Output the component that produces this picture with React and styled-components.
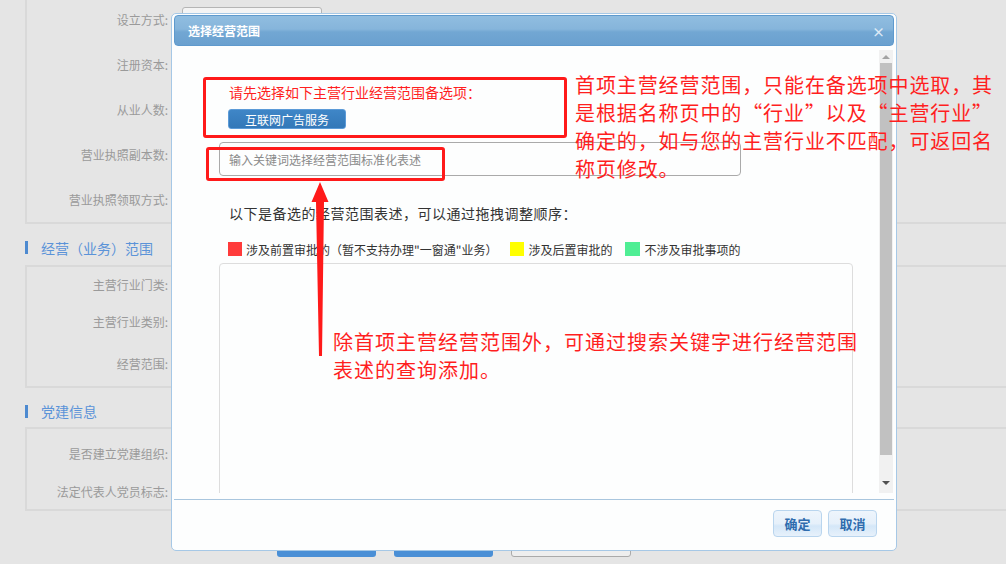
import styled, { createGlobalStyle } from 'styled-components'

const GlobalStyle = createGlobalStyle`
  html, body {
    margin: 0;
    padding: 0;
    background: #e5e5e5;
    font-family: "Noto Sans CJK SC", "Noto Sans", "Liberation Sans", sans-serif;
  }
  * { box-sizing: border-box; }
`

const Page = styled.div`
  position: relative;
  width: 1006px;
  height: 564px;
  overflow: hidden;
  background: #e5e5e5;
`

/* ---------- background form ---------- */

const Panel = styled.div`
  margin-left: 25px;
  width: 1100px;
  border: 2px solid #d9d9d9;
  border-right: none;
  border-top: ${({ cut }) => (cut ? 'none' : '2px solid #d9d9d9')};
  margin-top: ${({ cut }) => (cut ? '-3px' : '0')};
  padding-top: ${({ pad }) => pad || 0}px;
`

const Row = styled.div`
  display: flex;
  align-items: center;
  height: ${({ h }) => h || 45}px;
`

const Label = styled.div`
  width: 141px;
  text-align: right;
  font-size: 12px;
  color: #9a9a9a;
  white-space: nowrap;
`

const Field = styled.div`
  margin-left: 14px;
  width: 140px;
  height: 26px;
  border: 1px solid #b5b5b5;
  border-radius: 3px;
  background: #f4f4f4;
`

const SectionTitle = styled.div`
  display: flex;
  align-items: center;
  height: ${({ h }) => h}px;
  padding-left: 25px;
  padding-top: ${({ top }) => top || 0}px;
  font-size: 14px;
  color: #5b93d8;
  &::before {
    content: '';
    display: block;
    width: 3px;
    height: 13px;
    background: #4d8ad0;
    margin-right: 13px;
  }
`

const ButtonBar = styled.div`
  display: flex;
  gap: 18px;
  margin-top: 18px;
  padding-left: 277px;
`

const BgButton = styled.div`
  width: ${({ w }) => w || 99}px;
  height: 28px;
  border-radius: 3px;
  background: ${({ grey }) => (grey ? '#eeeeee' : '#4a8fd6')};
  border: ${({ grey }) => (grey ? '1px solid #aaaaaa' : 'none')};
`

/* ---------- modal ---------- */

const Modal = styled.div`
  position: absolute;
  left: 171px;
  top: 13px;
  width: 726px;
  height: 538px;
  border: 1px solid #a6c8e6;
  border-radius: 5px;
  background: #fdfefe;
  padding: 1px 2px 0 2px;
  display: flex;
  flex-direction: column;
`

const Header = styled.div`
  height: 31px;
  flex: none;
  display: flex;
  align-items: center;
  justify-content: space-between;
  padding: 0 8px 0 13px;
  border: 1px solid #5f9acd;
  border-radius: 4px;
  background: linear-gradient(to bottom, #90bde0 0%, #86b5db 45%, #72a7d3 55%, #6aa0cf 100%);
`

const Title = styled.span`
  color: #ffffff;
  font-size: 12px;
  font-weight: bold;
`

const Close = styled.span`
  color: #dce9f6;
  font-size: 13px;
  font-weight: bold;
  line-height: 1;
  margin-top: 2px;
`

const Body = styled.div`
  display: flex;
  height: 447px;
  flex: none;
`

const Content = styled.div`
  flex: 1;
  overflow: hidden;
  padding-left: 45px;
`

const Hint = styled.div`
  margin-top: 36px;
  padding-left: 10px;
  font-size: 14px;
  line-height: 20px;
  color: #ff1f1f;
`

const MainScope = styled.div`
  margin-top: 7px;
  margin-left: 9px;
  width: 118px;
  height: 20px;
  display: flex;
  align-items: center;
  justify-content: center;
  font-size: 12px;
  color: #fff;
  border: 1px solid #5c9bd8;
  border-radius: 3px;
  background: linear-gradient(to bottom, #3f86c7, #3378b8);
`

const Search = styled.div`
  margin-top: 13px;
  width: 522px;
  height: 34px;
  border: 1px solid #aaaaaa;
  border-radius: 4px;
  display: flex;
  align-items: center;
  padding-left: 9px;
  font-size: 12px;
  color: #8a8a8a;
`

const Desc = styled.div`
  margin-top: 27px;
  padding-left: 10px;
  font-size: 14px;
  line-height: 20px;
  letter-spacing: 0.5px;
  color: #333;
`

const Legend = styled.div`
  margin-top: 16px;
  padding-left: 9px;
  height: 20px;
  display: flex;
  align-items: center;
  font-size: 12px;
  color: #333;
`

const Swatch = styled.span`
  width: ${({ w }) => w || 14}px;
  height: 14px;
  background: ${({ color }) => color};
  margin-right: 4px;
  margin-left: ${({ gap }) => gap || 0}px;
`

const ListBox = styled.div`
  margin-top: 4px;
  width: 634px;
  height: 300px;
  border: 1px solid #dddddd;
  border-radius: 4px;
`

const Scrollbar = styled.div`
  width: 14px;
  margin-top: 4px;
  margin-right: 1px;
  background: #f1f1f1;
  display: flex;
  flex-direction: column;
  align-items: center;
`

const Arrow = styled.div`
  height: 13px;
  flex: none;
  display: flex;
  align-items: center;
  justify-content: center;
  &::after {
    content: '';
    border-left: 4px solid transparent;
    border-right: 4px solid transparent;
    ${({ down }) =>
      down ? 'border-top: 4px solid #505050;' : 'border-bottom: 4px solid #a3a3a3;'}
  }
`

const Thumb = styled.div`
  width: 12px;
  height: 392px;
  background: #c1c1c1;
`

const Spacer = styled.div`
  flex: ${({ grow }) => (grow ? 1 : 'none')};
  height: ${({ h }) => h || 0}px;
`

const Footer = styled.div`
  margin-top: 6px;
  border-top: 1px solid #a9c6de;
  height: 51px;
  display: flex;
  justify-content: flex-end;
  gap: 6px;
  padding: 10px 17px 0 0;
`

const FootButton = styled.div`
  width: 49px;
  height: 27px;
  display: flex;
  align-items: center;
  justify-content: center;
  font-size: 13px;
  font-weight: 600;
  color: #2f6cae;
  border: 1px solid #b9d5ee;
  border-radius: 4px;
  background: linear-gradient(to bottom, #eef5fc 0%, #e6f0fa 50%, #d4e7f8 60%, #e7f1fb 100%);
`

/* ---------- red annotations ---------- */

const Mark = styled.div`
  position: absolute;
  left: ${({ x }) => x}px;
  top: ${({ y }) => y}px;
  width: ${({ w }) => w}px;
  height: ${({ h }) => h}px;
  border: 3px solid #ff1a1a;
  border-radius: 3px;
`

const Note = styled.div`
  position: absolute;
  left: ${({ x }) => x}px;
  top: ${({ y }) => y}px;
  font-size: ${({ size }) => size}px;
  letter-spacing: ${({ ls }) => ls || 0}px;
  line-height: 28px;
  color: #ff1f1f;
  white-space: nowrap;
`

const ArrowSvg = styled.svg`
  position: absolute;
  left: 308px;
  top: 180px;
`

const rows1 = ['设立方式:', '注册资本:', '从业人数:', '营业执照副本数:', '营业执照领取方式:']

export default function App() {
  return (
    <>
      <GlobalStyle />
      <Page>
        <Panel cut>
          {rows1.map((l) => (
            <Row key={l}>
              <Label>{l}</Label>
              <Field />
            </Row>
          ))}
        </Panel>
        <SectionTitle h={41} top={6}>经营（业务）范围</SectionTitle>
        <Panel>
          <Row h={34}><Label>主营行业门类:</Label></Row>
          <Row h={40}><Label>主营行业类别:</Label></Row>
          <Row h={45}><Label>经营范围:</Label></Row>
        </Panel>
        <SectionTitle h={39} top={7}>党建信息</SectionTitle>
        <Panel pad={4}>
          <Row h={40}><Label>是否建立党建组织:</Label></Row>
          <Row h={36}><Label>法定代表人党员标志:</Label></Row>
        </Panel>
        <ButtonBar>
          <BgButton />
          <BgButton />
          <BgButton grey w={120} />
        </ButtonBar>

        <Modal>
          <Header>
            <Title>选择经营范围</Title>
            <Close>×</Close>
          </Header>
          <Body>
            <Content>
              <Hint>请先选择如下主营行业经营范围备选项：</Hint>
              <MainScope>互联网广告服务</MainScope>
              <Search>输入关键词选择经营范围标准化表述</Search>
              <Desc>以下是备选的经营范围表述，可以通过拖拽调整顺序：</Desc>
              <Legend>
                <Swatch color="#ff3b3b" />
                涉及前置审批的（暂不支持办理"一窗通"业务）
                <Swatch color="#ffff00" gap={13} />
                涉及后置审批的
                <Swatch color="#4fee94" w={15} gap={13} />
                不涉及审批事项的
              </Legend>
              <ListBox />
            </Content>
            <Scrollbar>
              <Arrow />
              <Thumb />
              <Spacer grow />
              <Arrow down />
              <Spacer h={4} />
            </Scrollbar>
          </Body>
          <Footer>
            <FootButton>确定</FootButton>
            <FootButton>取消</FootButton>
          </Footer>
        </Modal>

        <Mark x={203} y={77} w={364} h={61} />
        <Mark x={206} y={147} w={239} h={34} />
        <Note x={575} y={71} size={20} ls={0.9}>
          首项主营经营范围，只能在备选项中选取，其<br />
          是根据名称页中的“行业”以及“主营行业”<br />
          确定的，如与您的主营行业不匹配，可返回名<br />
          称页修改。
        </Note>
        <Note x={333} y={328} size={20} ls={1}>
          除首项主营经营范围外，可通过搜索关键字进行经营范围<br />
          表述的查询添加。
        </Note>
        <ArrowSvg width="24" height="180" viewBox="0 0 24 180">
          <polygon
            points="12,2 20.5,22 16,22 14,176 11,176 8,22 3.5,22"
            fill="#ff1a1a"
          />
        </ArrowSvg>
      </Page>
    </>
  )
}
